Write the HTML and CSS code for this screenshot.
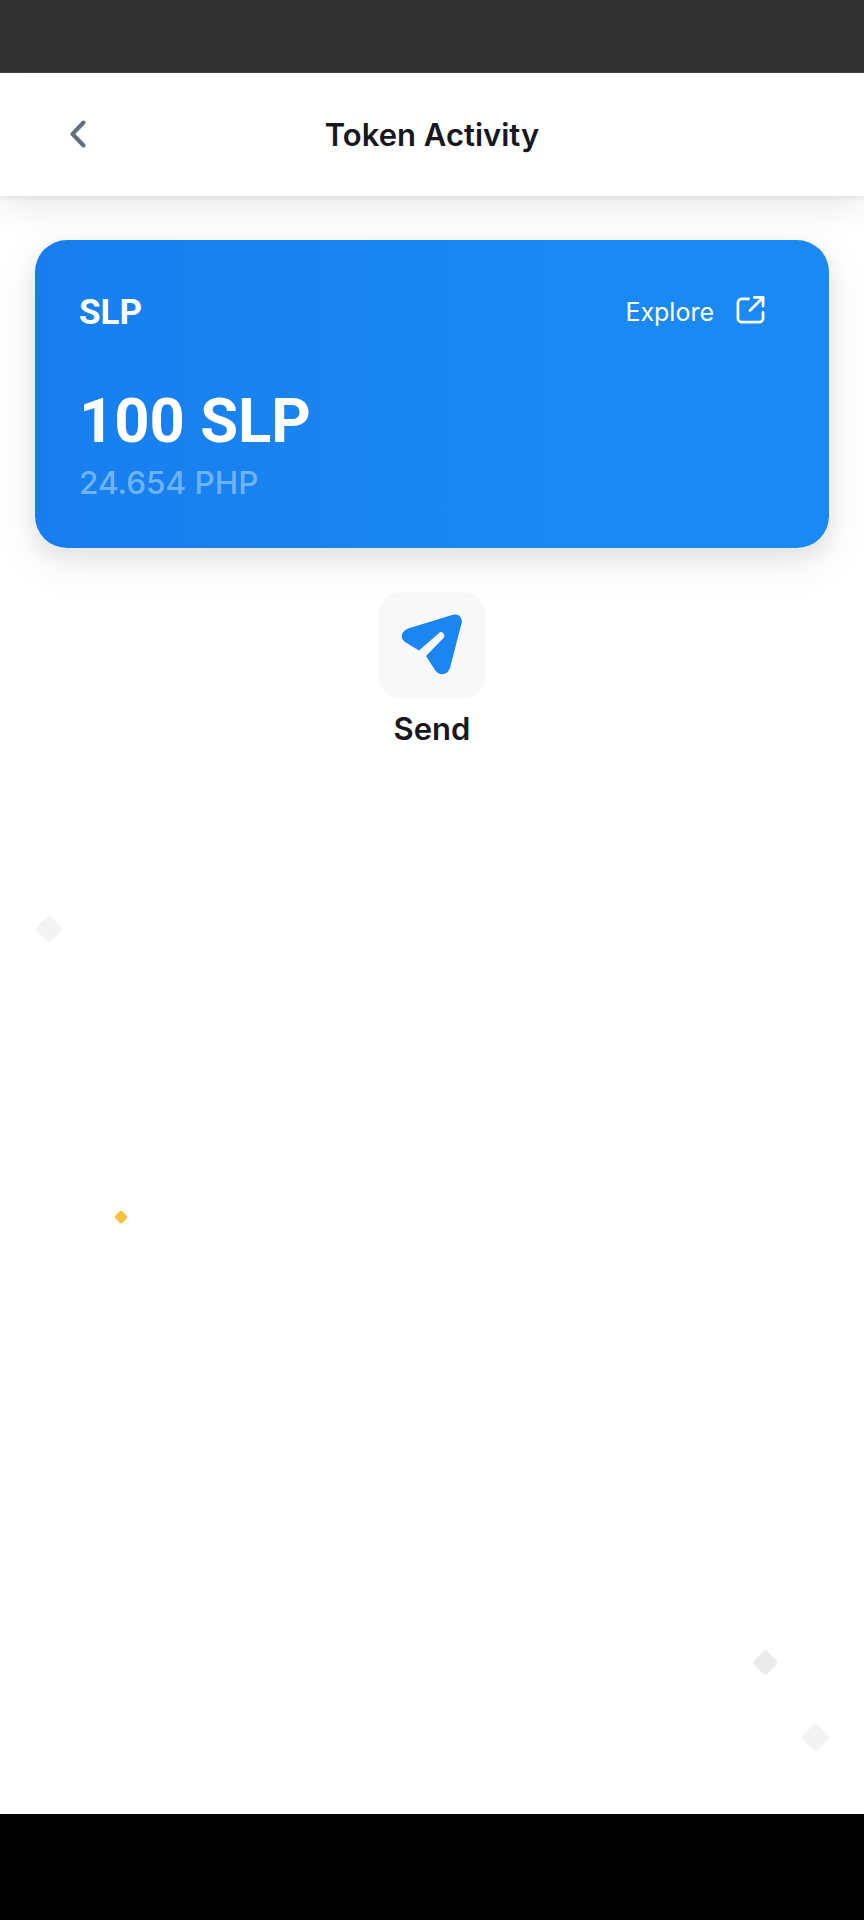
FILE: index.html

```html
<!DOCTYPE html>
<html lang="en">
<head>
  <meta charset="UTF-8">
  <title>Token Activity</title>
  <meta name="viewport" content="width=device-width, initial-scale=1" />
  <link rel="stylesheet" href="styles.css">
</head>
<body>
  <div class="screen">
    <div class="status-bar"></div>

    <header class="app-header">
      <a class="back" href="#" aria-label="Back">
        <svg width="20" height="28" viewBox="0 0 20 28" fill="none" stroke="#5f7181" stroke-width="4" stroke-linecap="round" stroke-linejoin="round">
          <path d="M15.5 2.5 L4.5 14 L15.5 25.5"/>
        </svg>
      </a>
      <h1>Token Activity</h1>
    </header>

    <main class="content">
      <section class="token-card">
        <div class="card-top">
          <span class="token-name">SLP</span>
          <a class="explore" href="#">
            <span>Explore</span>
            <svg class="explore-icon" width="29" height="29" viewBox="0 0 30 30" fill="none" stroke="#fff" stroke-width="2.8" stroke-linecap="round" stroke-linejoin="round">
              <path d="M13 4 H6 a4 4 0 0 0 -4 4 V24 a4 4 0 0 0 4 4 H24 a4 4 0 0 0 4 -4 V18"/>
              <path d="M19 2.5 H28 V11.5"/>
              <path d="M28 2.5 L14.5 16"/>
            </svg>
          </a>
        </div>
        <div class="balance">100 SLP</div>
        <div class="fiat">24.654 PHP</div>
      </section>

      <a class="action" href="#">
        <span class="action-icon">
          <svg width="68" height="68" viewBox="0 0 68 68">
            <path fill="#1b85f0" d="M10 17.5 L55 3.8 Q63 2.5 64 10.5 L52 57 Q48 66 40 62 Q38 61 37 59 L28 45 L45.5 27 Q47.5 24.5 45 22 Q43 20 40.5 22.5 L21 39.5 L7 31 Q2 27 4.5 22 Q6 19 10 17.5 Z"/>
          </svg>
        </span>
        <span class="action-label">Send</span>
      </a>
    </main>

    <i class="diamond d1"></i>
    <i class="diamond d2"></i>
    <i class="diamond d3"></i>
    <i class="diamond d4"></i>

    <div class="nav-bar"></div>
  </div>
</body>
</html>
```

FILE: styles.css

```css
* { box-sizing: border-box; }
html, body { margin: 0; background: #fff; }
body { font-family: "Inter", "Liberation Sans", sans-serif; color: #16181d; }
a { color: inherit; text-decoration: none; }

.screen { position: relative; width: 864px; height: 1920px; overflow: hidden; display: flex; flex-direction: column; background: #fff; }
.status-bar { height: 73px; background: #323232; border-bottom: 1px solid #484848; }
.nav-bar { height: 106px; background: #000; }

.app-header { position: relative; height: 123px; background: #fff; display: flex; align-items: center; justify-content: center; box-shadow: 0 2px 4px rgba(0,0,0,0.07), 0 8px 36px rgba(0,0,0,0.1); z-index: 1; }
.app-header h1 { margin: 0; font-size: 31px; font-weight: 600; line-height: 36px; }
.back { position: absolute; left: 68px; top: 47px; display: flex; }

.content { flex: 1; padding: 44px 35px 0; display: flex; flex-direction: column; align-items: center; }

.token-card { position: relative; z-index: 2; width: 794px; height: 308px; padding: 51px 64px 0 44px; border-radius: 32px; color: #fff; background: linear-gradient(90deg, #187eee 0%, #1a8af2 70%); box-shadow: 0 8px 16px 4px rgba(0,0,0,0.06), 0 14px 40px 8px rgba(0,0,0,0.05); }
.card-top { display: flex; justify-content: space-between; align-items: flex-start; height: 43px; }
.token-name { font-family: "Roboto", sans-serif; font-weight: 700; font-size: 35px; line-height: 44px; }
.explore { display: flex; align-items: center; gap: 22px; font-size: 25px; font-weight: 400; line-height: 36px; margin-top: 3px; }
.explore-icon { margin-top: -5px; }
.balance { margin-top: 52px; font-family: "Roboto", sans-serif; font-weight: 700; font-size: 61.5px; line-height: 70px; }
.fiat { font-size: 31.5px; font-weight: 500; line-height: 38px; color: #6fb3f7; margin-top: 8px; }

.action { margin-top: 44px; display: flex; flex-direction: column; align-items: center; }
.action-icon { width: 106px; height: 106px; border-radius: 22px; background: #f8f8f8; display: flex; align-items: center; justify-content: center; }
.action-label { margin-top: 12px; font-size: 31px; font-weight: 600; line-height: 38px; }

/* background confetti */
.diamond { position: absolute; transform: rotate(45deg); border-radius: 3px; background: #f3f3f3; }
.d1 { left: 39px; top: 919px; width: 20px; height: 20px; }
.d2 { left: 116px; top: 1212px; width: 10px; height: 10px; border-radius: 2px; background: #fdc244; }
.d3 { left: 756px; top: 1653px; width: 19px; height: 19px; border-radius: 4px; background: #ebebeb; }
.d4 { left: 805px; top: 1727px; width: 21px; height: 21px; border-radius: 4px; }
```
